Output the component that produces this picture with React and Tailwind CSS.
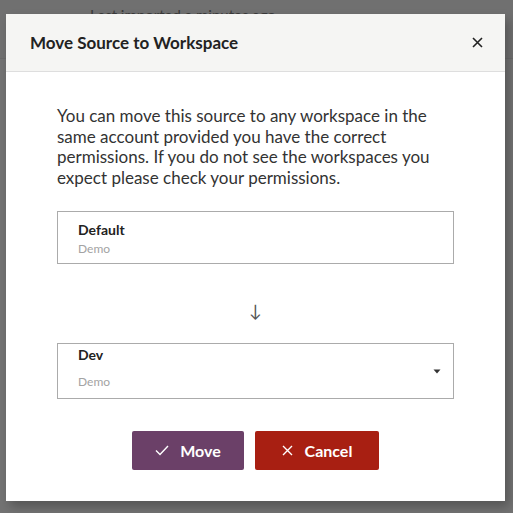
import React from "react";

const font = { fontFamily: "Lato, 'Noto Sans', sans-serif" };

const WorkspaceBox = ({ name, account, select = false }) => (
  <div
    className={`relative border border-[#ababab] bg-white pl-5 pr-4 ${
      select ? "h-[56px] pt-[2px]" : "h-[53px] pt-[9px]"
    }`}
  >
    <div className="text-[14px] font-bold leading-[18px] text-[#222]">{name}</div>
    <div
      className={`text-[12px] leading-[16px] text-[#a3a3a3] ${select ? "mt-[10px]" : "mt-[2px]"}`}
    >
      {account}
    </div>
    {select && (
      <svg
        className="absolute right-[12px] top-[25px]"
        width="8"
        height="5"
        viewBox="0 0 8 5"
      >
        <path d="M0.5 0.5 H7.5 L4 4.5 Z" fill="#333" />
      </svg>
    )}
  </div>
);

export default function App() {
  return (
    <div className="relative h-[513px] w-[513px] overflow-hidden bg-[#737373]" style={font}>
      {/* page behind the overlay */}
      <div className="h-[59px] border-b border-[#6a6a6a] bg-[#707070] pl-[90px] pt-[4px] text-[15px] text-[#3a3a3a]">
        Last imported a minutes ago
      </div>

      {/* dialog */}
      <div className="absolute left-[6px] top-[14px] w-[499px] bg-white shadow-[4px_6px_10px_rgba(0,0,0,0.25)]">
        <div className="flex h-[58px] items-center justify-between border-b border-[#dedede] bg-[#f5f5f3] pl-[24px] pr-[22px]">
          <h2 className="text-[17px] font-bold text-[#222]">Move Source to Workspace</h2>
          <svg width="11" height="11" viewBox="0 0 11 11">
            <path d="M1 1 L10 10 M10 1 L1 10" stroke="#222" strokeWidth="1.6" />
          </svg>
        </div>

        <div className="px-[51px] pb-[31px] pt-[34px]">
          <p className="text-[17px] leading-[20.5px] text-[#333]">
            You can move this source to any workspace in the
            <br />
            same account provided you have the correct
            <br />
            permissions. If you do not see the workspaces you
            <br />
            expect please check your permissions.
          </p>

          <div className="mt-[23px]">
            <WorkspaceBox name="Default" account="Demo" />
          </div>

          <div className="flex h-[79px] items-center justify-center pt-[14px] text-[17px] text-[#555]">
            ↓
          </div>

          <WorkspaceBox name="Dev" account="Demo" select />

          <div className="mt-[32px] flex justify-center gap-[11px]">
            <button className="flex h-[39px] w-[112px] items-center justify-center gap-[11px] rounded-[2px] bg-[#6b4068] text-[16px] font-bold text-white">
              <svg width="14" height="11" viewBox="0 0 14 11">
                <path d="M1 5.5 L5 9.5 L13 1" stroke="#fff" strokeWidth="1.4" fill="none" />
              </svg>
              Move
            </button>
            <button className="flex h-[39px] w-[124px] items-center justify-center gap-[12px] rounded-[2px] bg-[#a81f12] text-[16px] font-bold text-white">
              <svg width="11" height="11" viewBox="0 0 11 11">
                <path d="M1 1 L10 10 M10 1 L1 10" stroke="#fff" strokeWidth="1.4" />
              </svg>
              Cancel
            </button>
          </div>
        </div>
      </div>
    </div>
  );
}
